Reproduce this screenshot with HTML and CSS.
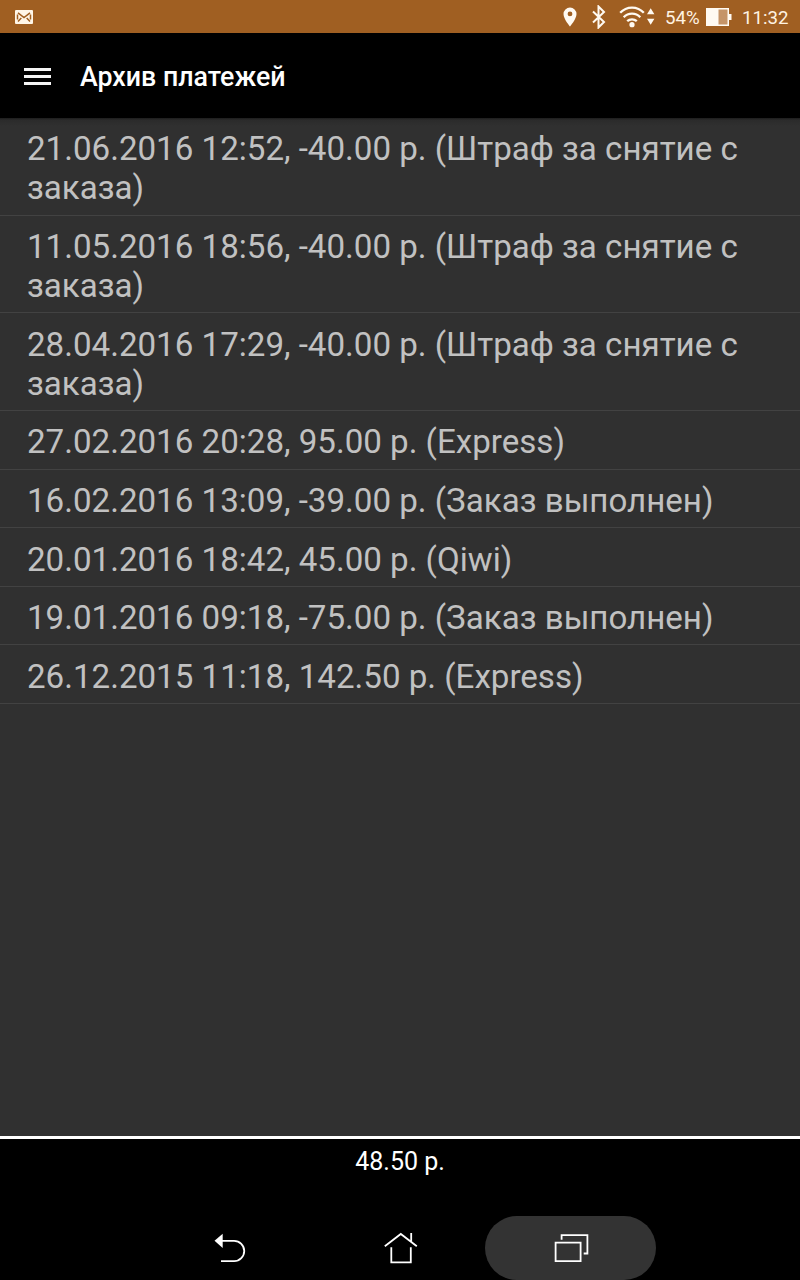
FILE: index.html
```html
<!DOCTYPE html>
<html lang="ru">
<head>
  <meta charset="UTF-8" />
  <meta name="viewport" content="width=device-width, initial-scale=1.0" />
  <title>Архив платежей</title>
  <link rel="stylesheet" href="styles.css">
</head>
<body>
  <div class="status-bar">
    <svg class="mail" width="18" height="14" viewBox="0 0 18 14">
      <rect width="18" height="14" rx="1" fill="#fff6e8" />
      <path d="M3 2.800l6 4.700 6-4.700M3 11.500L6.300 8M15 11.500L11.700 8M2.500 4.500v5M15.500 4.500v5" fill="none" stroke="#a05f22" stroke-width="1.500" />
    </svg>
    <div class="status-icons">
      <svg class="pin" width="14" height="20" viewBox="0 0 14 20">
        <path fill-rule="evenodd" d="M7 .5A6.500 6.500 0 0 0 .5 7C.5 12 7 19.500 7 19.500S13.500 12 13.500 7A6.500 6.500 0 0 0 7 .5zM7 4.500a2.400 2.400 0 1 1 0 4.800 2.400 2.400 0 0 1 0-4.800z" />
      </svg>
      <svg class="bluetooth" width="16" height="24" viewBox="0 0 16 24">
        <path d="M2 6.500l11 10.500-5.500 5.500v-21L13 7 2 17.500" />
      </svg>
      <svg class="wifi" width="37" height="24" viewBox="0 0 37 24">
        <path d="M1.200 7.800a16 16 0 0 1 23.600 0M4.700 12.200a11.500 11.500 0 0 1 16.600 0M8.200 16.200a7 7 0 0 1 9.600 0" />
        <circle cx="13" cy="19.700" r="2.600" />
        <path class="arrows" d="M31.700 3.300l3.700 6h-7.400zM31.700 19.800l3.700-6h-7.400z" />
      </svg>
      <span class="percent">54%</span>
      <svg class="battery" width="26" height="18" viewBox="0 0 26 18">
        <path d="M0 0h23v6h2.500v6H23v6H0z" fill="#fffaf2" />
        <path d="M12.500 1.500H21.500v15H12.500z" fill="#c59468" />
      </svg>
      <span class="clock">11:32</span>
    </div>
  </div>

  <header>
    <button class="menu" aria-label="Меню"><i></i><i></i><i></i></button>
    <h1>Архив платежей</h1>
  </header>

  <main>
    <ul class="payments">
      <li>21.06.2016 12:52, -40.00 р. (Штраф за снятие с заказа)</li>
      <li>11.05.2016 18:56, -40.00 р. (Штраф за снятие с заказа)</li>
      <li>28.04.2016 17:29, -40.00 р. (Штраф за снятие с заказа)</li>
      <li>27.02.2016 20:28, 95.00 р. (Express)</li>
      <li>16.02.2016 13:09, -39.00 р. (Заказ выполнен)</li>
      <li>20.01.2016 18:42, 45.00 р. (Qiwi)</li>
      <li>19.01.2016 09:18, -75.00 р. (Заказ выполнен)</li>
      <li>26.12.2015 11:18, 142.50 р. (Express)</li>
    </ul>
  </main>

  <footer>48.50 р.</footer>

  <nav>
    <a class="nav-button">
      <svg width="36" height="36" viewBox="0 0 36 36">
        <path d="M10 10.800h13.100a10.150 10.150 0 0 1 0 20.300H10" />
        <path class="solid" d="M3.500 10.800L11.700 3.700v14.200z" />
      </svg>
    </a>
    <a class="nav-button">
      <svg width="36" height="36" viewBox="0 0 36 36">
        <path d="M2.800 16.200L18.800 4 34.800 16.200M29.200 3v9.500M9.300 17.300v15h19.500v-15" />
      </svg>
    </a>
    <a class="nav-button active">
      <svg width="36" height="36" viewBox="0 0 36 36">
        <path d="M2.600 12.600h25v18.500h-25zM8.600 9.800V5.200h25.800v18.300h-3.700" />
      </svg>
    </a>
  </nav>
</body>
</html>
```

FILE: styles.css
```css
:root {
  --accent: #a05f22;
  --bg: #303030;
  --divider: #424242;
  --text: #c1c1c1;
}

* {
  box-sizing: border-box;
}

body {
  margin: 0;
  height: 1280px;
  display: flex;
  flex-direction: column;
  overflow: hidden;
  font-family: Roboto, sans-serif;
  background: #000;
  color: #fff;
}

svg {
  display: block;
  flex: none;
}

.status-bar {
  height: 33px;
  padding: 0 10px 0 15px;
  display: flex;
  align-items: center;
  justify-content: space-between;
  background: var(--accent);
}

.status-icons {
  display: flex;
  align-items: center;
  fill: #fffaf2;
  color: #fff3e2;
}

.bluetooth {
  margin-left: 14px;
  fill: none;
  stroke: #fffaf2;
  stroke-width: 2;
}

.wifi {
  margin-left: 12px;
}

.wifi path {
  fill: none;
  stroke: #fffaf2;
  stroke-width: 2.3;
}

.wifi .arrows {
  fill: #fffaf2;
  stroke: none;
}

.percent {
  width: 34px;
  margin-left: 9px;
  padding-top: 2px;
  font-size: 18.67px;
}

.battery {
  margin-left: 7px;
}

.clock {
  width: 48px;
  margin-left: 10px;
  padding-top: 2px;
  font-size: 18.67px;
}

header {
  height: 85px;
  padding-left: 24px;
  display: flex;
  align-items: center;
}

.menu {
  width: 27px;
  height: 17px;
  margin-top: 1px;
  padding: 0;
  display: flex;
  flex-direction: column;
  justify-content: space-between;
  border: none;
  background: none;
}

.menu i {
  height: 3px;
  background: #f4f4f4;
}

h1 {
  margin: 3px 0 0 29px;
  font-size: 26.75px;
  font-weight: 500;
}

main {
  height: 1018px;
  background: linear-gradient(#1d1d1d, #2b2b2b 2px, var(--bg) 8px);
}

.payments {
  margin: 0;
  padding: 0;
  list-style: none;
}

.payments li {
  padding: 11.4px 27px 7.25px;
  border-bottom: 1px solid var(--divider);
  font-size: 33.12px;
  line-height: 39px;
  color: var(--text);
}

footer {
  height: 80px;
  padding-top: 8px;
  border-top: 3px solid #fff;
  font-size: 25px;
  line-height: 30px;
  text-align: center;
}

nav {
  height: 64px;
  padding-right: 1px;
  display: flex;
  justify-content: center;
}

.nav-button {
  width: 171px;
  height: 64px;
  display: flex;
  align-items: center;
  justify-content: center;
  border-radius: 32px;
}

.nav-button.active {
  background: #333;
}

.nav-button svg {
  fill: none;
  stroke: #fff;
  stroke-width: 1.8;
}

.nav-button .solid {
  fill: #fff;
  stroke: none;
}
```
